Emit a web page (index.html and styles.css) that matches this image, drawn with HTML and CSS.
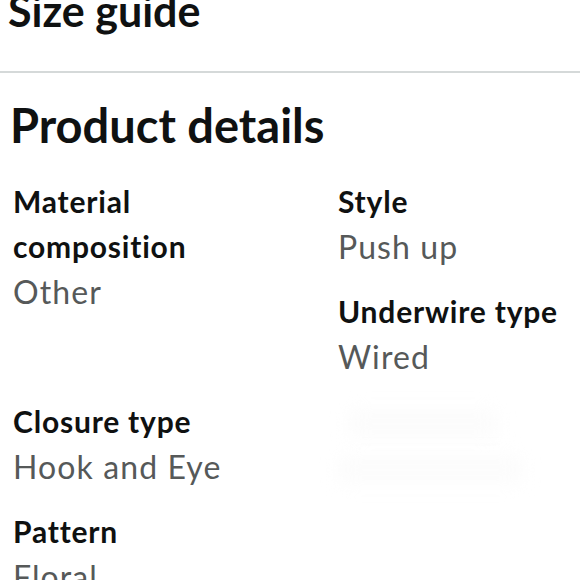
FILE: index.html
```html
<!DOCTYPE html>
<html lang="en">
<head>
<meta charset="utf-8">
<title>Product details</title>
<link rel="stylesheet" href="styles.css">
</head>
<body>
<section class="size-guide">
  <h2 class="size-title">Size guide</h2>
</section>
<section class="details">
  <h2 class="details-title">Product details</h2>
  <div class="grid">
    <div class="item item-tall">
      <div class="label">Material composition</div>
      <div class="value">Other</div>
    </div>
    <div class="item">
      <div class="label">Style</div>
      <div class="value">Push up</div>
    </div>
    <div class="item">
      <div class="label">Underwire type</div>
      <div class="value">Wired</div>
    </div>
    <div class="item">
      <div class="label">Closure type</div>
      <div class="value">Hook and Eye</div>
    </div>
    <div class="item item-blur" aria-hidden="true">
      <div class="blob blob-a"></div>
      <div class="blob blob-b"></div>
    </div>
    <div class="item">
      <div class="label">Pattern</div>
      <div class="value">Floral</div>
    </div>
  </div>
</section>
</body>
</html>
```

FILE: styles.css
```css
html, body {
  margin: 0;
  padding: 0;
  background: #ffffff;
}

body {
  font-family: Lato, "Open Sans", sans-serif;
  color: #0f1111;
  overflow: hidden;
  height: 580px;
}

.size-guide {
  border-bottom: 2px solid #d5d9d9;
  padding: 0 0 36px 8px;
}

.size-title {
  margin: -13px 0 0;
  font-size: 43px;
  line-height: 48px;
  font-weight: 700;
}

.details {
  padding: 0 0 0 13px;
}

.details-title {
  margin: 22px 0 0 -3px;
  font-size: 47px;
  line-height: 60px;
  font-weight: 700;
}

.grid {
  display: grid;
  grid-template-columns: 325px 1fr;
  row-gap: 20px;
  margin-top: 24px;
}

.item-tall {
  grid-row: span 2;
}

.label {
  font-size: 30px;
  line-height: 45px;
  font-weight: 700;
  letter-spacing: 0.8px;
  color: #0f1111;
  width: 200px;
}

.item:nth-child(2) .label,
.item:nth-child(3) .label {
  width: auto;
}

.value {
  font-size: 32px;
  line-height: 45px;
  font-weight: 400;
  letter-spacing: 1.1px;
  color: #565959;
}

.item-blur {
  min-height: 90px;
}

.blob {
  background: #fcfcfc;
  filter: blur(8px);
  border-radius: 10px;
}

.blob-a {
  width: 150px;
  height: 30px;
  margin: 10px 0 0 10px;
}

.blob-b {
  width: 185px;
  height: 30px;
  margin: 16px 0 0 0;
}
```
